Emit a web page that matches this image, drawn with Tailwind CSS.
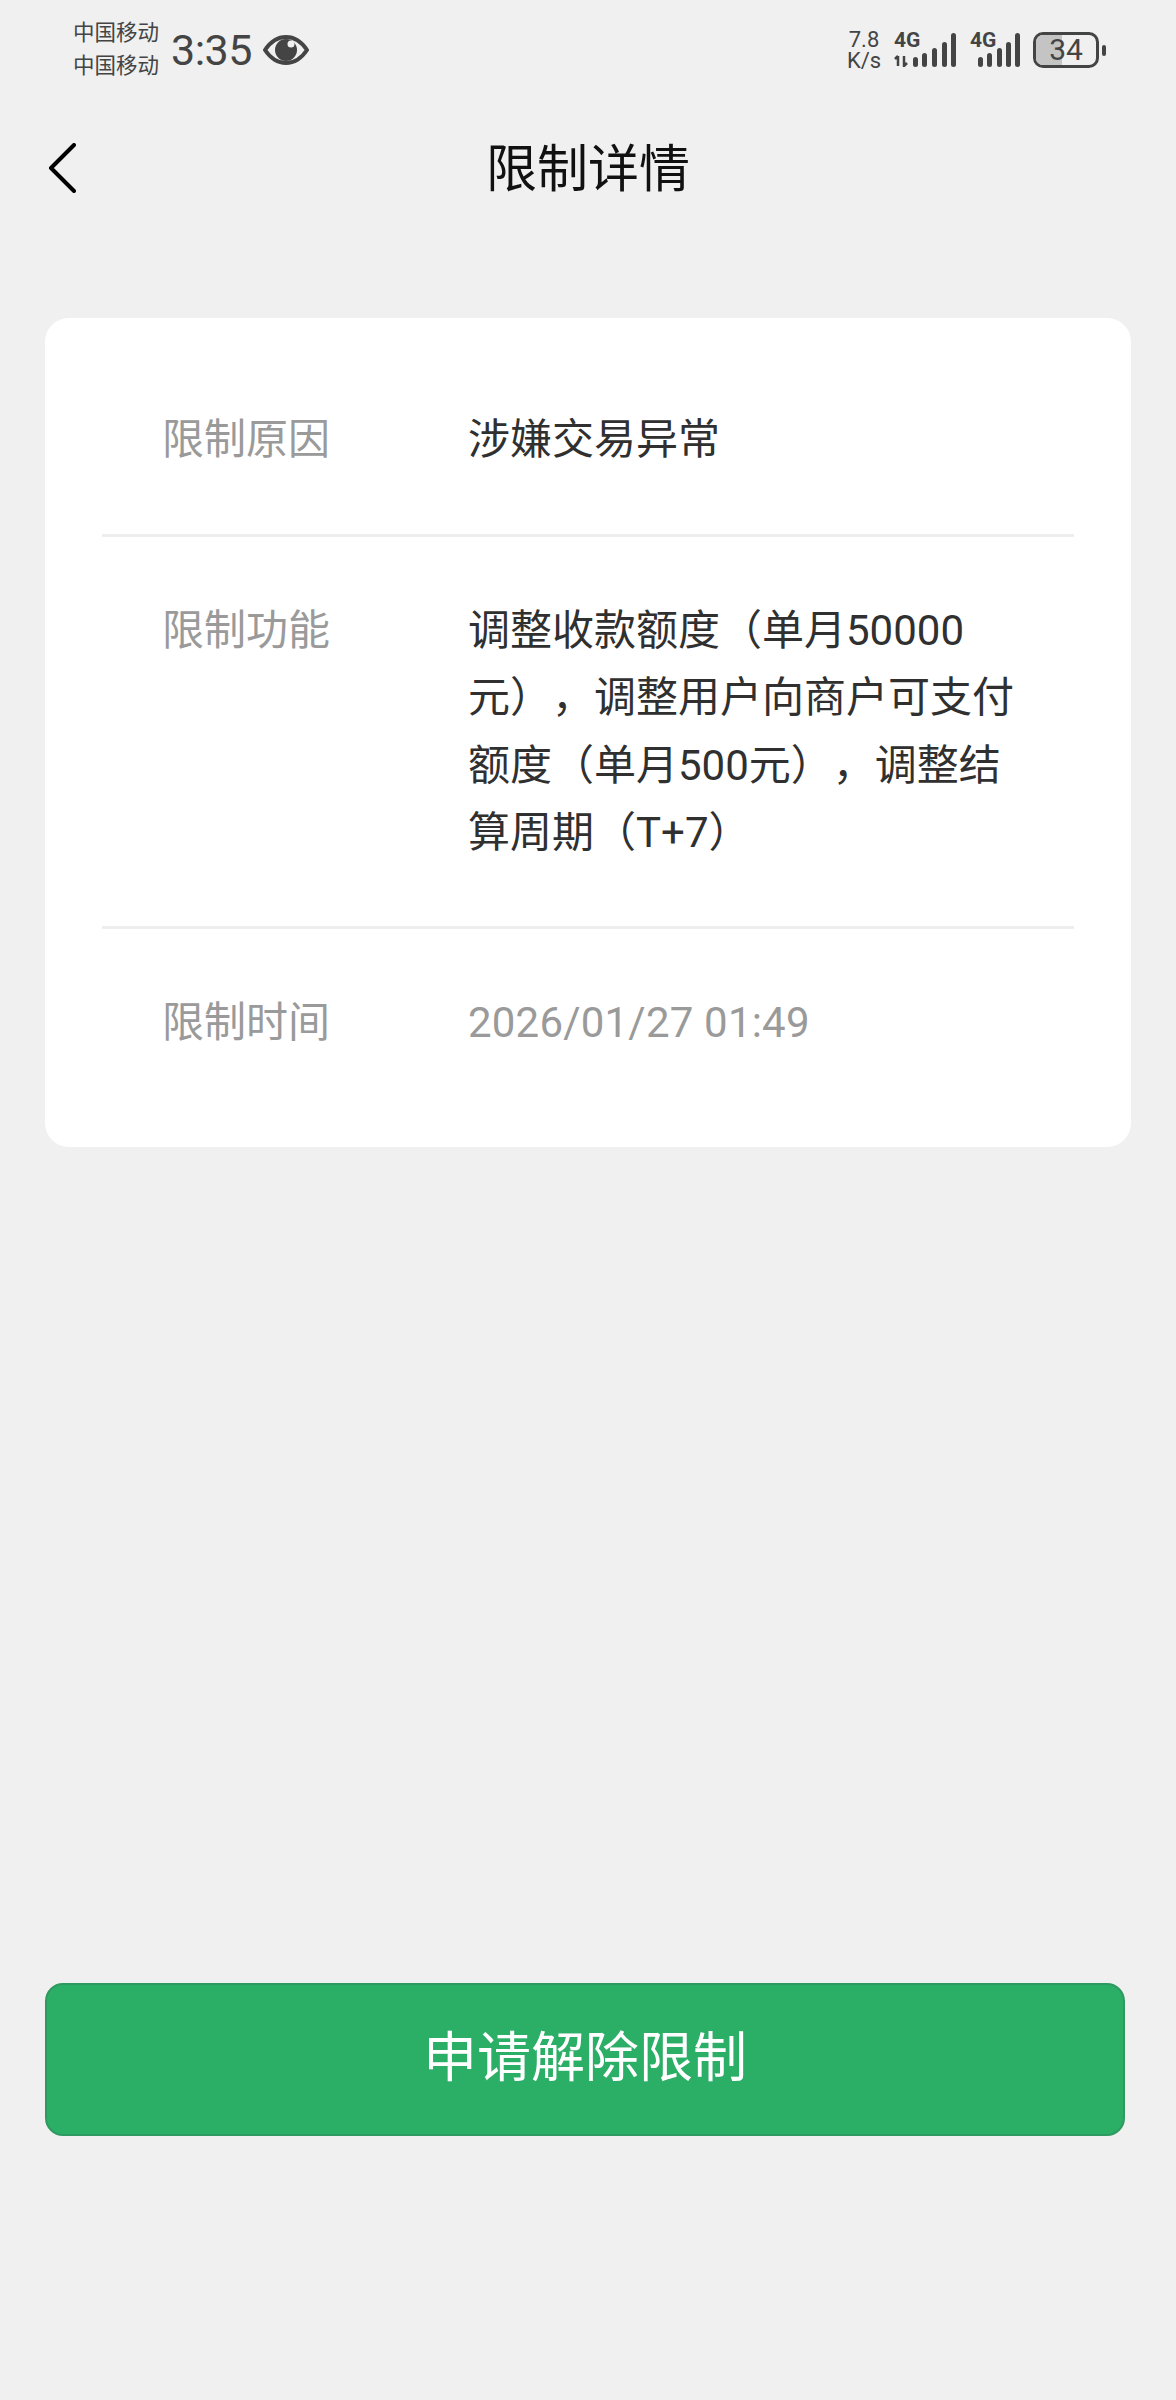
<!DOCTYPE html>
<html lang="zh-CN"><head><meta charset="utf-8"><script src="https://cdn.jsdelivr.net/npm/@tailwindcss/browser@4"></script></head>
<body class="m-0">
<div class="w-[1176px] h-[2400px] bg-[#f0f0f0] overflow-hidden flex flex-col font-['Roboto','Noto_Sans_CJK_SC',sans-serif] [text-spacing-trim:space-all]">
  <!-- status bar -->
  <div class="h-[100px] flex items-center justify-between pl-[73px] pr-[70px] text-[#444]">
    <div class="flex items-center">
      <div class="flex flex-col text-[21.5px] leading-[33px] w-[90px] -mt-[2px]"><span>中国移动</span><span>中国移动</span></div>
      <span class="ml-[8px] text-[43px] leading-none tracking-[-0.5px]">3:35</span>
      <svg class="ml-[11px]" width="46" height="32" viewBox="0 0 46 32"><path d="M2 16C8 7 15 3 23 3s15 4 21 13c-6 9-13 13-21 13S8 25 2 16Z" fill="none" stroke="#444" stroke-width="4"/><circle cx="23" cy="16" r="11" fill="#444"/><circle cx="28" cy="10" r="3.5" fill="#f0f0f0"/></svg>
    </div>
    <div class="flex items-center">
      <div class="flex flex-col items-center text-[22px] leading-[21px] w-[36px] ml-[2px]"><span>7.8</span><span>K/s</span></div>
      <div class="relative ml-[12px] w-[62px] h-[34px]">
        <span class="absolute left-0 -top-[3px] text-[21px] leading-[20px] font-bold">4G</span>
        <svg class="absolute inset-0" width="62" height="34" viewBox="0 0 62 34"><g fill="#444"><path d="M4 23v10M1 26l3-3M10 23v10l3-3" fill="none" stroke="#444" stroke-width="2.5"/><rect x="19" y="24" width="5" height="10" rx="2.5"/><rect x="28" y="20" width="5" height="14" rx="2.5"/><rect x="38" y="15" width="5" height="19" rx="2.5"/><rect x="48" y="9" width="5" height="25" rx="2.5"/><rect x="57" y="0" width="5" height="34" rx="2.5"/></g></svg>
      </div>
      <div class="relative ml-[14px] w-[50px] h-[34px]">
        <span class="absolute left-0 -top-[3px] text-[21px] leading-[20px] font-bold">4G</span>
        <svg class="absolute inset-0" width="50" height="34" viewBox="0 0 50 34"><g fill="#444"><rect x="8" y="24" width="5" height="10" rx="2.5"/><rect x="17" y="20" width="5" height="14" rx="2.5"/><rect x="27" y="15" width="5" height="19" rx="2.5"/><rect x="36" y="9" width="5" height="25" rx="2.5"/><rect x="45" y="0" width="5" height="34" rx="2.5"/></g></svg>
      </div>
      <div class="ml-[13px] flex items-center">
        <div class="relative w-[66px] h-[36px] rounded-[10px] border-[3px] border-[#444] overflow-hidden flex items-center justify-center">
          <div class="absolute left-0 top-0 bottom-0 w-[26px] bg-[#c4c4c4]"></div>
          <span class="relative text-[30px] leading-none">34</span>
        </div>
        <div class="ml-[3px] w-[4px] h-[11px] rounded-[2px] bg-[#444]"></div>
      </div>
    </div>
  </div>
  <!-- nav -->
  <div class="relative h-[100px] mt-[19px] flex items-center justify-center">
    <svg class="absolute left-[46px] top-[24px]" width="32" height="50" viewBox="0 0 32 50"><path d="M28 2 5 25l23 23" fill="none" stroke="#000" stroke-width="4" stroke-linecap="round" stroke-linejoin="round"/></svg>
    <span class="text-[51px] leading-none text-[#111]">限制详情</span>
  </div>
  <!-- card -->
  <div class="mt-[99px] mx-[45px] w-[1086px] h-[829px] bg-white rounded-[24px] px-[57px] flex flex-col">
    <div class="h-[219px] flex pt-[92px] border-b-[3px] border-[#eeeeee] text-[42px] leading-[60px]">
      <span class="w-[366px] pl-[60px] shrink-0 text-[#9a9a9a]">限制原因</span>
      <span class="text-[#303030]">涉嫌交易异常</span>
    </div>
    <div class="h-[392px] flex pt-[60px] border-b-[3px] border-[#eeeeee] text-[42px] leading-[67.4px]">
      <span class="w-[366px] pl-[60px] shrink-0 text-[#9a9a9a]">限制功能</span>
      <div class="text-[#303030] flex flex-col whitespace-nowrap"><span>调整收款额度（单月50000</span><span>元），调整用户向商户可支付</span><span>额度（单月500元），调整结</span><span>算周期（T+7）</span></div>
    </div>
    <div class="flex pt-[64px] text-[42px] leading-[60px] text-[#9a9a9a]">
      <span class="w-[366px] pl-[60px] shrink-0">限制时间</span>
      <span class="tracking-[0.2px]">2026/01/27 01:49</span>
    </div>
  </div>
  <!-- button -->
  <div class="mt-[836px] ml-[45px] w-[1080px] h-[153px] rounded-[18px] bg-[#2bae66] border-2 border-[#2f9a60] flex items-center justify-center text-white text-[54px] leading-none pb-[2px]">申请解除限制</div>
</div>
</body></html>
